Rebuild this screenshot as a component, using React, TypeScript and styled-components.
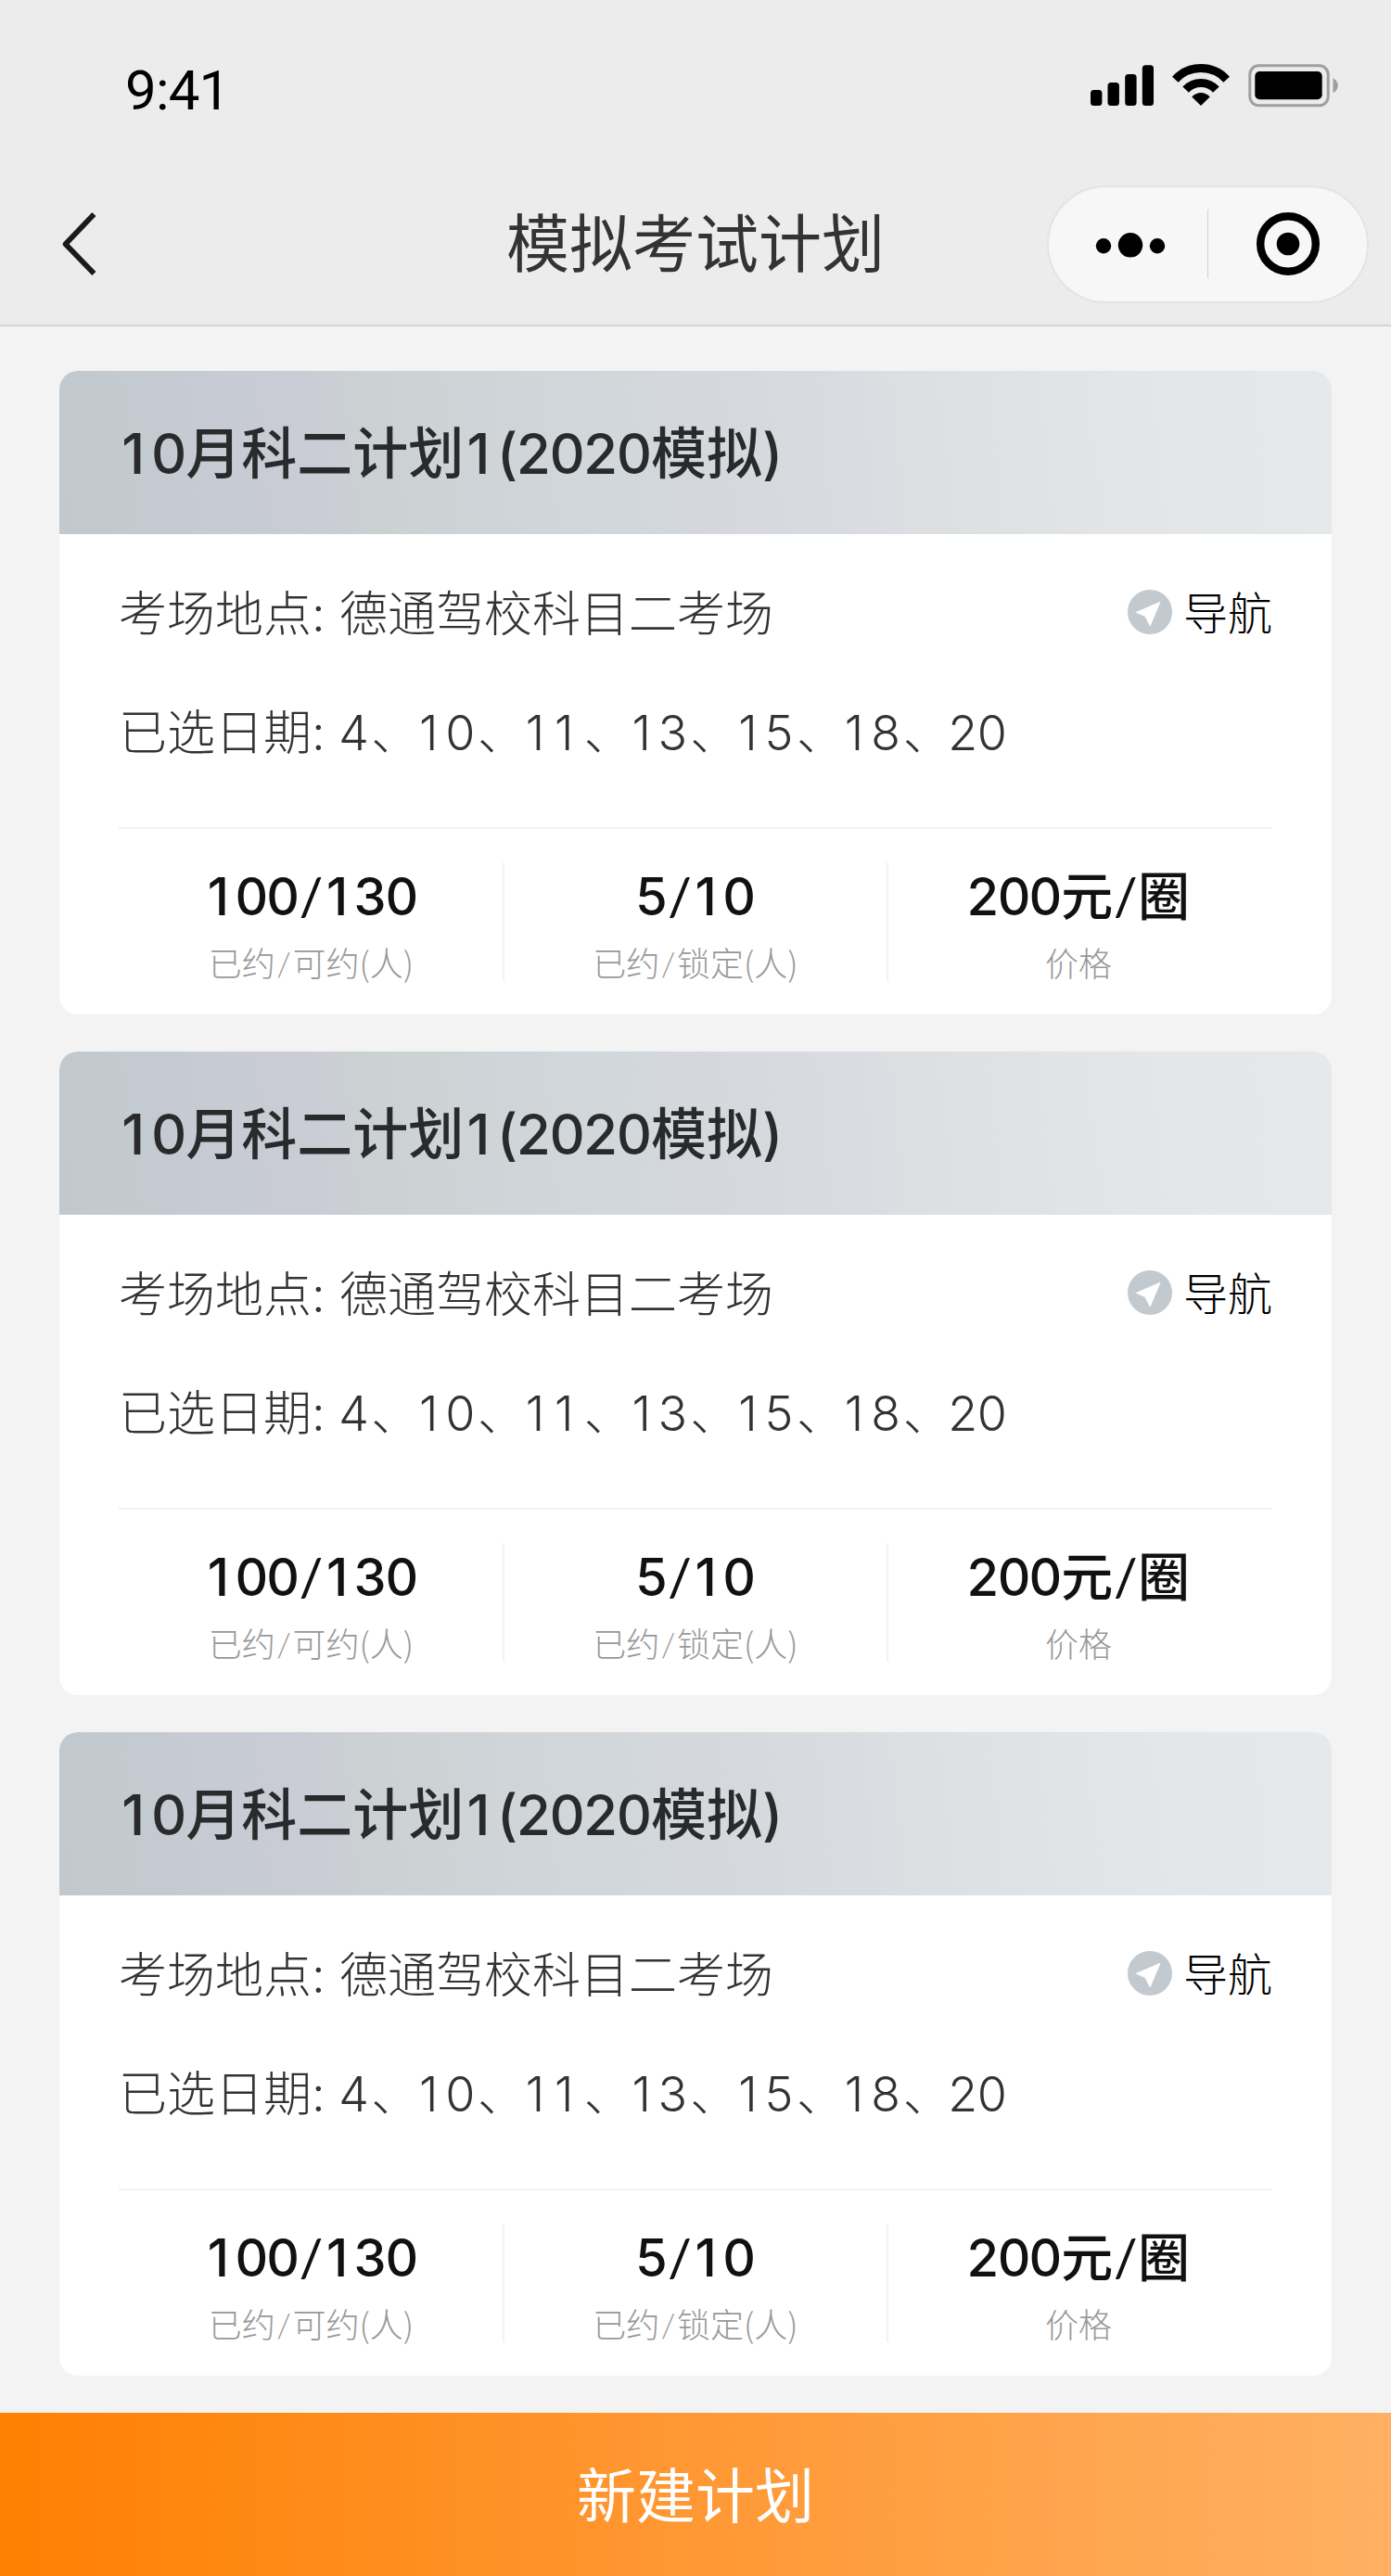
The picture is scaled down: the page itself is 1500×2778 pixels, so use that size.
import React from "react";
import styled, { createGlobalStyle } from "styled-components";

const latinFirst = `Inter, "Noto Sans CJK SC", sans-serif`;
const hanFirst = `"Noto Sans CJK SC", sans-serif`;

const GlobalStyle = createGlobalStyle`
  *, *::before, *::after { box-sizing: border-box; }
  body {
    margin: 0;
    background: #f3f3f3;
    font-family: ${latinFirst};
  }
`;

const Screen = styled.div`
  display: flex;
  flex-direction: column;
  width: 1500px;
  height: 2778px;
  background: #f3f3f3;
`;

const Header = styled.header`
  flex: none;
  height: 352px;
  background: #ececec;
  border-bottom: 2px solid #d5d5d5;
`;

const StatusBar = styled.div`
  display: flex;
  justify-content: space-between;
  align-items: flex-start;
  height: 176px;
  padding: 68px 56px 0 135px;
`;

const Clock = styled.time`
  font-family: Roboto, sans-serif;
  font-size: 60px;
  line-height: 60px;
  letter-spacing: -0.8px;
  color: #000;
`;

const StatusIcons = styled.div`
  display: flex;
  gap: 20px;

  svg { display: block; }
`;

const NavBar = styled.nav`
  display: grid;
  grid-template-columns: 1fr auto 1fr;
  align-items: center;
  height: 174px;
  padding: 0 24px;
`;

const BackButton = styled.button`
  justify-self: start;
  margin-left: 43px;
  padding: 0;
  border: 0;
  background: none;

  svg { display: block; }
`;

const PageTitle = styled.h1`
  margin: 0;
  font-size: 68px;
  font-weight: 400;
  line-height: 80px;
  color: #333;
`;

const Capsule = styled.div`
  justify-self: end;
  display: flex;
  align-items: center;
  width: 347px;
  height: 127px;
  border: 2px solid #e4e4e4;
  border-radius: 64px;
  background: #f7f7f7;
`;

const CapsuleButton = styled.button<{ $shift?: number }>`
  flex: 0 0 171px;
  display: flex;
  justify-content: center;
  padding: 0 0 0 ${(p) => p.$shift ?? 0}px;
  border: 0;
  background: none;

  svg { display: block; }
`;

const CapsuleDivider = styled.span`
  width: 2px;
  height: 74px;
  background: #d3d3d3;
`;

const PlanList = styled.main`
  flex: 1;
  display: flex;
  flex-direction: column;
  gap: 40px;
  padding: 48px 64px 0;
`;

const Card = styled.article`
  height: 694px;
  border-radius: 20px;
  overflow: hidden;
  background: #fff;
`;

const CardTitle = styled.h2`
  height: 176px;
  margin: 0;
  padding-left: 64px;
  font-size: 60px;
  font-weight: 500;
  line-height: 179px;
  color: #292a2b;
  background: linear-gradient(
    84deg,
    #c1c9cf 0%,
    #c3cad0 7%,
    #c6cad2 10%,
    #cacdd5 21%,
    #cbd0d3 23.5%,
    #d1d7da 42%,
    #d5d8dd 53%,
    #d9dce1 63%,
    #dbdfe2 66%,
    #e2e6e9 84%,
    #e5e9ec 100%
  );
`;

const DigitRun = styled.span`
  margin: 0 0.022em 0 -0.022em;
  font-variant-numeric: tabular-nums;
  letter-spacing: -0.045em;
`;

const One = styled.span`
  display: inline-block;
  width: 0.603em;
  padding-left: 0.075em;
  font-variant-numeric: normal;
  letter-spacing: 0;
`;

const CardBody = styled.div`
  padding: 51px 64px 0;
`;

const InfoRow = styled.div`
  display: flex;
  align-items: center;
  height: 72px;
  margin-bottom: 56px;
  font-size: 52px;
  font-weight: 300;
  line-height: 72px;
  color: #333;
  white-space: nowrap;
`;

const InfoLabel = styled.span`
  width: 238px;
`;

const Comma = styled.span`
  padding-left: 3px;
  margin-right: -3px;
`;

const NavigateLink = styled.a`
  display: flex;
  align-items: center;
  gap: 12px;
  margin: -3px 0 0 auto;
  font-size: 48px;
  color: #000;

  svg { display: block; margin-top: -4px; }
`;

const Stats = styled.div`
  display: grid;
  grid-template-columns: 415px 414px 415px;
  margin-top: 65px;
  padding-top: 36px;
  border-top: 2px solid #f3f3f3;
`;

const Stat = styled.div`
  display: flex;
  flex-direction: column;
  align-items: center;
  height: 128px;

  & + & { box-shadow: -1px 0 0 #f3f3f3, inset 1px 0 0 #f3f3f3; }
  &:last-child { padding-right: 3px; }
`;

const StatValue = styled.strong`
  font-size: 56px;
  font-weight: 500;
  line-height: 72px;
  color: #111;
`;

const StatLabel = styled.span`
  margin-top: 7px;
  font-family: ${hanFirst};
  font-size: 36px;
  font-weight: 300;
  line-height: 54px;
  color: #999;
`;

const Slash = styled.span<{ $gap: number }>`
  margin: 0 ${(p) => p.$gap}px;
  font-family: Lato, sans-serif;
  letter-spacing: 0;
`;

const CreateButton = styled.button`
  flex: none;
  height: 176px;
  padding: 3px 0 0;
  border: 0;
  font-family: ${latinFirst};
  font-size: 64px;
  font-weight: 400;
  line-height: 76px;
  color: #fff;
  background: linear-gradient(90deg, #ff8002 0%, #ff9834 50%, #ffb063 100%);
`;

const SignalIcon = () => (
  <svg width="68" height="48" viewBox="0 0 68 48">
    <rect x="0" y="29" width="12.4" height="17" rx="3.5" />
    <rect x="18.5" y="21" width="12.4" height="25" rx="3.5" />
    <rect x="37.2" y="12" width="12.4" height="34" rx="3.5" />
    <rect x="55.8" y="2.3" width="12.2" height="43.7" rx="3.5" />
  </svg>
);

const WifiIcon = () => (
  <svg width="62" height="48" viewBox="0 0 62 48" fill="none" stroke="#000">
    <path d="M3.3 17.7A37.5 37.5 0 0 1 58.7 17.7" strokeWidth="9" />
    <path d="M14.6 28.6A22.3 22.3 0 0 1 47.4 28.6" strokeWidth="9" />
    <path d="M21.3 36.6C26.5 30.6 35.5 30.6 40.7 36.6L31 46Z" fill="#000" stroke="none" />
  </svg>
);

const BatteryIcon = () => (
  <svg width="98" height="48" viewBox="0 0 98 48">
    <rect x="1.8" y="2.8" width="84.4" height="43" rx="9.5" fill="none" stroke="#9f9f9f" strokeWidth="3" />
    <rect x="7.3" y="9" width="72.4" height="30.2" rx="5" />
    <path d="M91.5 16.2C98.5 20 98.5 28.4 91.5 32.2Z" fill="#9f9f9f" />
  </svg>
);

const BackIcon = () => (
  <svg width="38" height="70" viewBox="0 0 38 70" fill="none" stroke="#1a1a1a" strokeWidth="5.8">
    <path d="M34.4 3L3.6 35.2L34.4 67" strokeLinejoin="round" />
  </svg>
);

const MoreIcon = () => (
  <svg width="76" height="68" viewBox="0 0 76 68">
    <circle cx="9" cy="36.3" r="8.2" />
    <circle cx="38" cy="35.3" r="13.2" />
    <circle cx="67" cy="36.3" r="8.2" />
  </svg>
);

const TargetIcon = () => (
  <svg width="70" height="70" viewBox="0 0 70 70">
    <circle cx="35" cy="35" r="29.8" fill="none" stroke="#000" strokeWidth="8.4" />
    <circle cx="35" cy="35" r="12.3" />
  </svg>
);

const LocateIcon = () => (
  <svg width="48" height="48" viewBox="0 0 48 48">
    <circle cx="24" cy="24" r="24" fill="#c2c9cf" />
    <path
      d="M35.1 13.2L24.2 39L19 28.8L9.2 24.3Z"
      fill="#fff"
      stroke="#fff"
      strokeWidth="0.8"
      strokeLinejoin="round"
    />
  </svg>
);

/* Tabular digits, with the plain (footless) form of "1" set on the same pitch. */
function Digits({ children }: { children: string }) {
  return (
    <DigitRun>
      {children.split(/(1)/).map((part, i) => (part === "1" ? <One key={i}>1</One> : part))}
    </DigitRun>
  );
}

interface Plan {
  id: number;
  place: string;
  dates: number[];
}

const plans: Plan[] = [1, 2, 3].map((id) => ({
  id,
  place: "德通驾校科目二考场",
  dates: [4, 10, 11, 13, 15, 18, 20],
}));

function PlanCard({ plan }: { plan: Plan }) {
  return (
    <Card>
      <CardTitle>
        <Digits>10</Digits>月科二计划<Digits>1(2020</Digits>模拟)
      </CardTitle>
      <CardBody>
        <InfoRow>
          <InfoLabel>考场地点:</InfoLabel>
          <span>{plan.place}</span>
          <NavigateLink>
            <LocateIcon />
            导航
          </NavigateLink>
        </InfoRow>
        <InfoRow>
          <InfoLabel>已选日期:</InfoLabel>
          <span>
            {plan.dates.map((date, i) => (
              <React.Fragment key={date}>
                {i > 0 && <Comma>、</Comma>}
                <Digits>{String(date)}</Digits>
              </React.Fragment>
            ))}
          </span>
        </InfoRow>
        <Stats>
          <Stat>
            <StatValue>
              <Digits>100</Digits>
              <Slash $gap={0.7}>/</Slash>
              <Digits>130</Digits>
            </StatValue>
            <StatLabel>
              已约<Slash $gap={1.5}>/</Slash>可约(人)
            </StatLabel>
          </Stat>
          <Stat>
            <StatValue>
              <Digits>5</Digits>
              <Slash $gap={0.7}>/</Slash>
              <Digits>10</Digits>
            </StatValue>
            <StatLabel>
              已约<Slash $gap={1.5}>/</Slash>锁定(人)
            </StatLabel>
          </Stat>
          <Stat>
            <StatValue>
              <Digits>200</Digits>元<Slash $gap={0.7}>/</Slash>圈
            </StatValue>
            <StatLabel>价格</StatLabel>
          </Stat>
        </Stats>
      </CardBody>
    </Card>
  );
}

export default function App() {
  return (
    <>
      <GlobalStyle />
      <Screen>
        <Header>
          <StatusBar>
            <Clock>9:41</Clock>
            <StatusIcons>
              <SignalIcon />
              <WifiIcon />
              <BatteryIcon />
            </StatusIcons>
          </StatusBar>
          <NavBar>
            <BackButton>
              <BackIcon />
            </BackButton>
            <PageTitle>模拟考试计划</PageTitle>
            <Capsule>
              <CapsuleButton $shift={5}>
                <MoreIcon />
              </CapsuleButton>
              <CapsuleDivider />
              <CapsuleButton>
                <TargetIcon />
              </CapsuleButton>
            </Capsule>
          </NavBar>
        </Header>
        <PlanList>
          {plans.map((plan) => (
            <PlanCard key={plan.id} plan={plan} />
          ))}
        </PlanList>
        <CreateButton>新建计划</CreateButton>
      </Screen>
    </>
  );
}
